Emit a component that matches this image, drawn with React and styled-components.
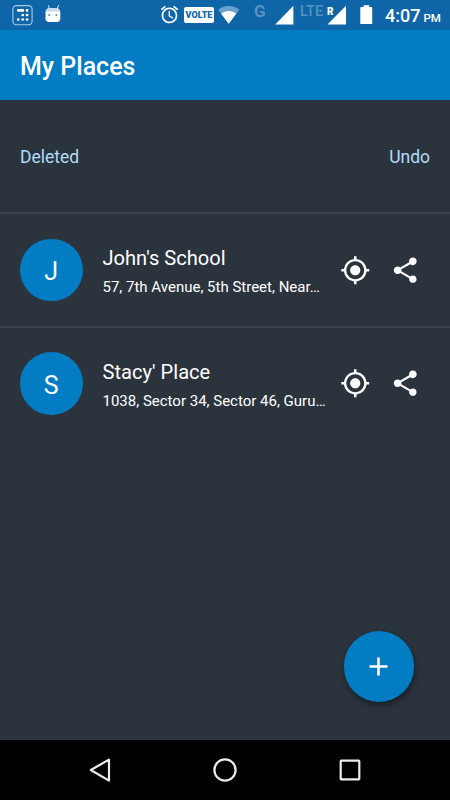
import React from "react";
import styled, { createGlobalStyle } from "styled-components";
import { MdAdd, MdAlarm, MdGpsFixed, MdShare } from "react-icons/md";

const places = [
    { id: 1, initial: "J", name: "John's School", address: "57, 7th Avenue, 5th Street, Near…" },
    { id: 2, initial: "S", name: "Stacy' Place", address: "1038, Sector 34, Sector 46, Guru…" },
];

const StatusBar = () => (
    <Status>
        <StatusIcon width="21" height="21" viewBox="0 0 21 21" $left={12}>
            <rect x=".9" y=".6" width="19.2" height="19.2" rx="3.6" fill="none" stroke="#a9cbea" strokeWidth="1.1" />
            <path d="M6.2 5.4h4.7M15 5.4h.1M10.7 10h.1M15 10h.1M6.2 14.5h.1M10.7 14.5h.1M15 14.5h.1" fill="none" stroke="#fff" strokeWidth="2.7" strokeLinecap="round" />
        </StatusIcon>
        <StatusIcon width="16" height="18" viewBox="0 0 16 18" $left={12}>
            <path d="M3.3 .5l1.3 3.5M13.5 .5l-1.3 3.5" stroke="#dce9f5" strokeWidth="1" strokeLinecap="round" />
            <path d="M.5 7.5C.5 4.500 2.600 3 5 3h6c2.400 0 4.300 1.500 4.300 4.500v6c0 2.500-1.500 3.500-3.500 3.500H4c-2 0-3.500-1-3.500-3.500z" fill="#fff" />
            <path d="M.7 6.500C1.100 4.100 2.800 3 5 3h6c2.200 0 3.700 1.100 4.100 3.500z" fill="#c7dced" />
            <circle cx="4.1" cy="9.9" r="1" fill="#5c8fbd" />
            <circle cx="11.3" cy="9.9" r="1" fill="#5c8fbd" />
        </StatusIcon>
        <Alarm />
        <Volte><span>VOLTE</span></Volte>
        <StatusIcon width="23" height="19" viewBox="0 0 23 19" $left={4}>
            <path d="M.3 4.700C3.400 2.100 6.900 1 10.700 1s7.500 1.100 10.600 3.700L10.700 18.700z" fill="#6ca1cf" />
            <path d="M3.200 8.800c2.200-1.800 4.700-2.700 7.500-2.700s5.300 .9 7.500 2.700l-7.500 9.900z" fill="#fff" />
        </StatusIcon>
        <Network $left={13} $width={21} $size={17} $bold>G</Network>
        <StatusIcon width="19" height="20" viewBox="0 0 19 20" $left={0}>
            <path d="M18.4 .8v18.700H.2z" fill="#fff" />
        </StatusIcon>
        <Network $left={6} $width={26} $size={14.5} $top={1}>LTE</Network>
        <RoamingSignal>
            <Roaming>R</Roaming>
            <StatusIcon width="20" height="20" viewBox="0 0 20 20" $left={0}>
                <path d="M19 .8v18.700H.5z" fill="#fff" />
            </StatusIcon>
        </RoamingSignal>
        <StatusIcon width="13" height="20" viewBox="0 0 13 20" $left={13}>
            <path d="M3.6 .3h5.600v1.800h2.300c.4 0 .7 .3 .7 .7v15.600c0 .4-.3 .7-.7 .7H1c-.4 0-.7-.3-.7-.7V2.800c0-.4 .3-.7 .7-.7h2.600z" fill="#fff" />
        </StatusIcon>
        <Clock>4:07<small>PM</small></Clock>
    </Status>
);

const Place = ({ place }) => (
    <Row>
        <Avatar>{place.initial}</Avatar>
        <Info>
            <Name>{place.name}</Name>
            <Address>{place.address}</Address>
        </Info>
        <IconButton aria-label="Locate"><MdGpsFixed /></IconButton>
        <IconButton aria-label="Share"><MdShare /></IconButton>
    </Row>
);

const App = () => (
    <>
        <GlobalStyle />
        <Screen>
            <StatusBar />
            <Header>
                <Title>My Places</Title>
            </Header>
            <List>
                <DeletedRow>
                    <span>Deleted</span>
                    <Undo>Undo</Undo>
                </DeletedRow>
                {places.map((place) => <Place key={place.id} place={place} />)}
                <AddButton aria-label="Add place"><MdAdd /></AddButton>
            </List>
            <NavBar>
                <svg width="24" height="26" viewBox="0 0 24 26">
                    <path d="M2.8 13 21 2.6v21z" />
                </svg>
                <svg width="24" height="26" viewBox="0 0 24 26">
                    <circle cx="12" cy="13" r="10.6" />
                </svg>
                <svg width="24" height="26" viewBox="0 0 24 26">
                    <rect x="2.7" y="3.7" width="18.6" height="18.6" rx=".5" />
                </svg>
            </NavBar>
        </Screen>
    </>
);

export default App;

const GlobalStyle = createGlobalStyle`
    * {
        box-sizing: border-box;
    }
    body {
        margin: 0;
        font-family: Roboto, "Liberation Sans", sans-serif;
    }
    button {
        padding: 0;
        border: 0;
        background: none;
        color: inherit;
        font: inherit;
        cursor: pointer;
    }
`;

const Screen = styled.div`
    width: 450px;
    height: 800px;
    display: flex;
    flex-direction: column;
    overflow: hidden;
    background: #2b333d;
    color: #fff;
`;

const Status = styled.div`
    flex: none;
    height: 30px;
    display: flex;
    align-items: flex-start;
    padding-top: 5px;
    background: #0e65a8;
`;

const StatusIcon = styled.svg`
    flex: none;
    display: block;
    margin-left: ${({ $left }) => $left}px;
`;

const Alarm = styled(MdAlarm)`
    flex: none;
    width: 21px;
    height: 21px;
    margin: -1px 0 0 98px;
`;

const Volte = styled.div`
    flex: none;
    width: 30px;
    height: 16px;
    margin: 2px 0 0 4px;
    display: flex;
    align-items: center;
    justify-content: center;
    border-radius: 2px;
    background: #fff;
    color: #0e65a8;
    font-size: 9px;
    font-weight: 900;
`;

const Network = styled.span`
    flex: none;
    width: ${({ $width }) => $width}px;
    margin-top: ${({ $top = 0 }) => $top}px;
    margin-left: ${({ $left }) => $left}px;
    color: #5792c5;
    font-size: ${({ $size }) => $size}px;
    font-weight: ${({ $bold }) => ($bold ? 700 : 500)};
    line-height: 12px;
`;

const RoamingSignal = styled.div`
    position: relative;
    margin-left: 1px;
`;

const Roaming = styled.span`
    position: absolute;
    top: 1px;
    left: 0;
    font-size: 10px;
    font-weight: 900;
    line-height: 11px;
`;

const Clock = styled.div`
    margin-left: 12px;
    font-size: 18px;
    font-weight: 500;
    line-height: 22px;
    white-space: nowrap;

    small {
        margin-left: 3px;
        font-size: 11.5px;
    }
`;

const Header = styled.header`
    flex: none;
    height: 70px;
    display: flex;
    align-items: center;
    padding: 3px 20px 0;
    background: #027dc4;
`;

const Title = styled.h1`
    margin: 0;
    font-size: 25px;
    font-weight: 500;
`;

const List = styled.main`
    position: relative;
    flex: 1;
`;

const DeletedRow = styled.div`
    height: 114px;
    display: flex;
    align-items: center;
    justify-content: space-between;
    padding: 2px 20px 0;
    border-bottom: 2px solid #3c454f;
    color: #b1dbfa;
    font-size: 17.5px;
`;

const Undo = styled.button``;

const Row = styled.div`
    height: 114px;
    display: flex;
    align-items: center;
    padding: 0 20px;
    border-bottom: 2px solid #3c454f;

    &:nth-child(3) {
        height: 113px;
        border-color: transparent;
    }
`;

const Avatar = styled.div`
    flex: none;
    width: 62.5px;
    height: 62.5px;
    display: flex;
    align-items: center;
    justify-content: center;
    padding-top: 3px;
    border-radius: 50%;
    background: #027dc4;
    font-size: 25px;
`;

const Info = styled.div`
    width: 227.5px;
    margin-left: 20px;
    padding-top: 6px;
    white-space: nowrap;
`;

const Name = styled.div`
    font-size: 20.1px;
    line-height: 28px;
`;

const Address = styled.div`
    font-size: 15px;
    line-height: 30px;
`;

const IconButton = styled.button`
    flex: none;
    width: 50px;
    height: 50px;
    display: flex;
    align-items: center;
    justify-content: center;

    svg {
        width: 30.5px;
        height: 30.5px;
    }
`;

const AddButton = styled.button`
    position: absolute;
    right: 36px;
    bottom: 38.5px;
    width: 70.5px;
    height: 70.5px;
    display: flex;
    align-items: center;
    justify-content: center;
    border-radius: 50%;
    background: #027dc4;
    box-shadow: 1px 3px 6px rgba(0, 0, 0, .45);

    svg {
        width: 31px;
        height: 31px;
    }
`;

const NavBar = styled.nav`
    flex: none;
    height: 60px;
    display: flex;
    align-items: center;
    justify-content: space-between;
    padding: 0 88px;
    background: #000;

    svg {
        fill: none;
        stroke: #ececec;
        stroke-width: 2.2;
        stroke-linejoin: round;
    }
`;
